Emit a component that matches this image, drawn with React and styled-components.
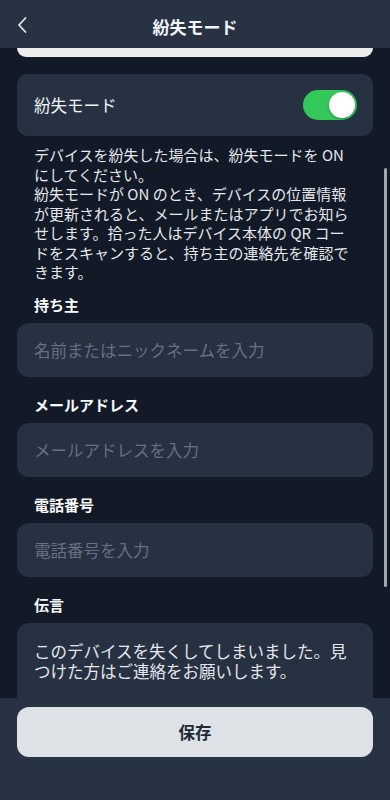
import React, { useState } from 'react';
import styled, { createGlobalStyle } from 'styled-components';

const GlobalStyle = createGlobalStyle`
  * { box-sizing: border-box; }
  html, body {
    margin: 0;
    padding: 0;
    background: #121927;
    font-family: "Noto Sans CJK JP", "Noto Sans", sans-serif;
  }
`;

function LostModePage() {
  const [isLost, setIsLost] = useState(true);

  return (
    <Screen>
      <GlobalStyle />
      <Header>
        <BackButton aria-label="戻る">
          <svg width="12" height="18" viewBox="0 0 12 18" fill="none">
            <polyline
              points="9.5,2 3,9 9.5,16"
              stroke="#e5e7eb"
              strokeWidth="1.8"
              strokeLinecap="round"
              strokeLinejoin="round"
            />
          </svg>
        </BackButton>
        <Title>紛失モード</Title>
      </Header>

      <ScrollArea>
        <Content>
          <CardTail />
          <ToggleCard>
            <ToggleLabel>紛失モード</ToggleLabel>
            <Switch $on={isLost} onClick={() => setIsLost(!isLost)}>
              <Knob $on={isLost} />
            </Switch>
          </ToggleCard>

          <Description>
            デバイスを紛失した場合は、紛失モードを ON にしてください。
            <br />
            紛失モードが ON のとき、デバイスの位置情報が更新されると、メールまたはアプリでお知らせします。拾った人はデバイス本体の QR コードをスキャンすると、持ち主の連絡先を確認できます。
          </Description>

          <FieldList>
            <Field>
              <Label>持ち主</Label>
              <Input type="text" placeholder="名前またはニックネームを入力" />
            </Field>
            <Field>
              <Label>メールアドレス</Label>
              <Input type="email" placeholder="メールアドレスを入力" />
            </Field>
            <Field>
              <Label>電話番号</Label>
              <Input type="tel" placeholder="電話番号を入力" />
            </Field>
            <Field>
              <Label>伝言</Label>
              <Message
                rows={4}
                defaultValue="このデバイスを失くしてしまいました。見つけた方はご連絡をお願いします。"
              />
            </Field>
          </FieldList>
        </Content>
        <ScrollThumb />
      </ScrollArea>

      <Footer>
        <SaveButton>保存</SaveButton>
      </Footer>
    </Screen>
  );
}

const Screen = styled.div`
  width: 100%;
  height: 100vh;
  display: flex;
  flex-direction: column;
  background: #121927;
  overflow: hidden;
`;
const Header = styled.header`
  position: relative;
  height: 48px;
  flex-shrink: 0;
  display: flex;
  align-items: center;
  justify-content: center;
  padding-top: 4px;
  background: #273243;
`;
const BackButton = styled.button`
  position: absolute;
  left: 16px;
  top: 16px;
  padding: 0;
  border: none;
  background: transparent;
  display: flex;
`;
const Title = styled.h1`
  margin: 0;
  font-size: 17px;
  font-weight: 700;
  color: #f3f4f6;
`;
const ScrollArea = styled.main`
  position: relative;
  flex: 1;
  overflow: hidden;
`;
const Content = styled.div`
  padding: 0 17px;
`;
const CardTail = styled.div`
  height: 9px;
  background: #ececec;
  border-radius: 0 0 10px 10px;
`;
const ToggleCard = styled.section`
  margin-top: 17px;
  height: 62px;
  padding: 0 16px 0 17px;
  display: flex;
  align-items: center;
  justify-content: space-between;
  background: #263142;
  border-radius: 11px;
`;
const ToggleLabel = styled.span`
  font-size: 16.5px;
  color: #f3f4f6;
`;
const Switch = styled.button`
  width: 54px;
  height: 30px;
  padding: 0;
  border: none;
  border-radius: 15px;
  background: ${(p) => (p.$on ? '#34c759' : '#4b5563')};
  display: flex;
  align-items: center;
  justify-content: ${(p) => (p.$on ? 'flex-end' : 'flex-start')};
  padding: 0 2px;
`;
const Knob = styled.span`
  width: 26px;
  height: 26px;
  border-radius: 50%;
  background: #ffffff;
  box-shadow: 0 1px 3px rgba(0, 0, 0, 0.25);
`;
const Description = styled.p`
  margin: 9px 0 0;
  padding: 0 17px;
  font-size: 15px;
  line-height: 19.5px;
  color: #e5e7eb;
`;
const FieldList = styled.div`
  margin-top: 13px;
  display: flex;
  flex-direction: column;
  gap: 18px;
`;
const Field = styled.div`
  display: flex;
  flex-direction: column;
  gap: 8px;
`;
const Label = styled.label`
  height: 20px;
  padding-left: 17px;
  font-size: 15px;
  line-height: 20px;
  font-weight: 700;
  color: #f9fafb;
`;
const Input = styled.input`
  height: 54px;
  width: 100%;
  padding: 0 17px;
  border: none;
  outline: none;
  border-radius: 12px;
  background: #263142;
  font-family: inherit;
  font-size: 16.5px;
  color: #e5e7eb;
  &::placeholder {
    color: #667080;
  }
`;
const Message = styled.textarea`
  width: 100%;
  height: 130px;
  padding: 18px 17px;
  border: none;
  outline: none;
  resize: none;
  border-radius: 12px;
  background: #263142;
  font-family: inherit;
  font-size: 16.5px;
  line-height: 20px;
  color: #e5e7eb;
`;
const ScrollThumb = styled.div`
  position: absolute;
  right: 3px;
  top: 120px;
  width: 3px;
  height: 419px;
  border-radius: 2px;
  background: #a3a8b0;
`;
const Footer = styled.footer`
  height: 102px;
  flex-shrink: 0;
  padding: 9px 17px 0;
  background: #273243;
`;
const SaveButton = styled.button`
  width: 100%;
  height: 50px;
  border: none;
  border-radius: 12px;
  background: #dee1e5;
  font-family: inherit;
  font-size: 16.5px;
  font-weight: 700;
  color: #1f2937;
`;

export default LostModePage;
